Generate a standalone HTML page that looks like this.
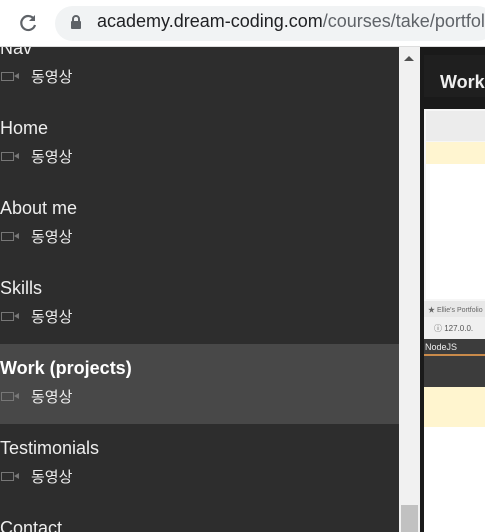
<!DOCTYPE html>
<html><head><meta charset="utf-8"><style>
*{margin:0;padding:0;box-sizing:border-box}
html,body{width:485px;height:532px;overflow:hidden}
body{background:#2d2d2d;font-family:"Liberation Sans","Noto Sans CJK KR",sans-serif;position:relative}
.bar{position:absolute;left:0;top:0;width:485px;height:47px;background:#fff;border-bottom:1px solid #ddd;overflow:hidden}
.omni{position:absolute;left:55px;top:6px;width:440px;height:35px;background:#f1f3f4;border-radius:18px}
.url{position:absolute;left:97px;top:11px;font-size:18px;color:#202124;white-space:nowrap}
.url span{color:#5f6368}
.side{position:absolute;left:0;top:47px;width:399px;height:485px;overflow:hidden;background:#2d2d2d}
.row{position:absolute;left:0;width:399px;height:80px}
.row.sel{background:#484848}
.t{position:absolute;left:0;top:14px;font-size:18px;color:#eee;white-space:nowrap}
.sel .t{font-weight:bold;color:#fff}
.s{position:absolute;left:31px;top:42px;font-size:15px;color:#eee}
.ic{position:absolute;left:1px;top:48px;width:13px;height:9px;border:1px solid #777}
.ic2{position:absolute;left:14px;top:49px;width:0;height:0;border-top:3.5px solid transparent;border-bottom:3.5px solid transparent;border-right:5px solid #777}
.sb{position:absolute;left:399px;top:47px;width:21px;height:485px;background:#f1f1f1}
.thumb{position:absolute;left:2px;top:458px;width:17px;height:27px;background:#c1c1c1}
.arr{position:absolute;left:5px;top:9px;border-left:5px solid transparent;border-right:5px solid transparent;border-bottom:5px solid #505050}
.rp{position:absolute;left:420px;top:47px;width:65px;height:485px;background:#1a1a1a;overflow:hidden}
</style></head><body>
<div class="bar">
<svg style="position:absolute;left:17px;top:12px" width="22" height="22" viewBox="0 0 22 22"><path d="M17 7A7 7 0 1 0 18 13" fill="none" stroke="#5f6368" stroke-width="2.2"/><path d="M18 3v6h-6z" fill="#5f6368"/></svg>
<div class="omni"></div>
<svg style="position:absolute;left:70px;top:14px" width="12" height="16" viewBox="0 0 12 16"><rect x="1" y="7" width="10" height="8" rx="1" fill="#5f6368"/><path d="M3 7V5a3 3 0 0 1 6 0v2" fill="none" stroke="#5f6368" stroke-width="2"/></svg>
<div class="url">academy.dream-coding.com<span>/courses/take/portfolio</span></div>
</div>
<div class="side">
<div class="row" style="top:-23px"><div class="t">Nav</div><div class="ic"></div><div class="ic2"></div><div class="s">동영상</div></div>
<div class="row" style="top:57px"><div class="t">Home</div><div class="ic"></div><div class="ic2"></div><div class="s">동영상</div></div>
<div class="row" style="top:137px"><div class="t">About me</div><div class="ic"></div><div class="ic2"></div><div class="s">동영상</div></div>
<div class="row" style="top:217px"><div class="t">Skills</div><div class="ic"></div><div class="ic2"></div><div class="s">동영상</div></div>
<div class="row sel" style="top:297px"><div class="t">Work (projects)</div><div class="ic"></div><div class="ic2"></div><div class="s">동영상</div></div>
<div class="row" style="top:377px"><div class="t">Testimonials</div><div class="ic"></div><div class="ic2"></div><div class="s">동영상</div></div>
<div class="row" style="top:457px"><div class="t">Contact</div></div>
</div>
<div class="sb"><div class="arr"></div><div class="thumb"></div></div>
<div class="rp">
<div style="position:absolute;left:4px;top:8px;width:61px;height:42px;background:#1f1f1f"></div>
<div style="position:absolute;left:20px;top:25px;font-size:18px;font-weight:bold;color:#eee">Work</div>
<div style="position:absolute;left:4px;top:62px;width:61px;height:192px;background:#f6f6f6"></div>
<div style="position:absolute;left:6px;top:64px;width:59px;height:30px;background:#ececec"></div>
<div style="position:absolute;left:6px;top:95px;width:59px;height:22px;background:#fff5d0"></div>
<div style="position:absolute;left:6px;top:117px;width:59px;height:135px;background:#fff"></div>
<div style="position:absolute;left:4px;top:254px;width:61px;height:16px;background:#e8e8e8;font-size:7px;color:#666;padding:4px 0 0 4px;white-space:nowrap">★ Ellie's Portfolio</div>
<div style="position:absolute;left:4px;top:270px;width:61px;height:22px;background:#f0f0f0;font-size:8px;color:#555;padding:6px 0 0 10px;white-space:nowrap">ⓘ 127.0.0.</div>
<div style="position:absolute;left:4px;top:292px;width:61px;height:48px;background:#3c3c3c;font-size:9px;color:#eee;padding:3px 0 0 1px">NodeJS</div>
<div style="position:absolute;left:4px;top:307px;width:61px;height:2px;background:#c98a4a"></div>
<div style="position:absolute;left:4px;top:340px;width:61px;height:40px;background:#fff5cf"></div>
<div style="position:absolute;left:4px;top:380px;width:61px;height:105px;background:#fff"></div>
</div>
</body></html>
